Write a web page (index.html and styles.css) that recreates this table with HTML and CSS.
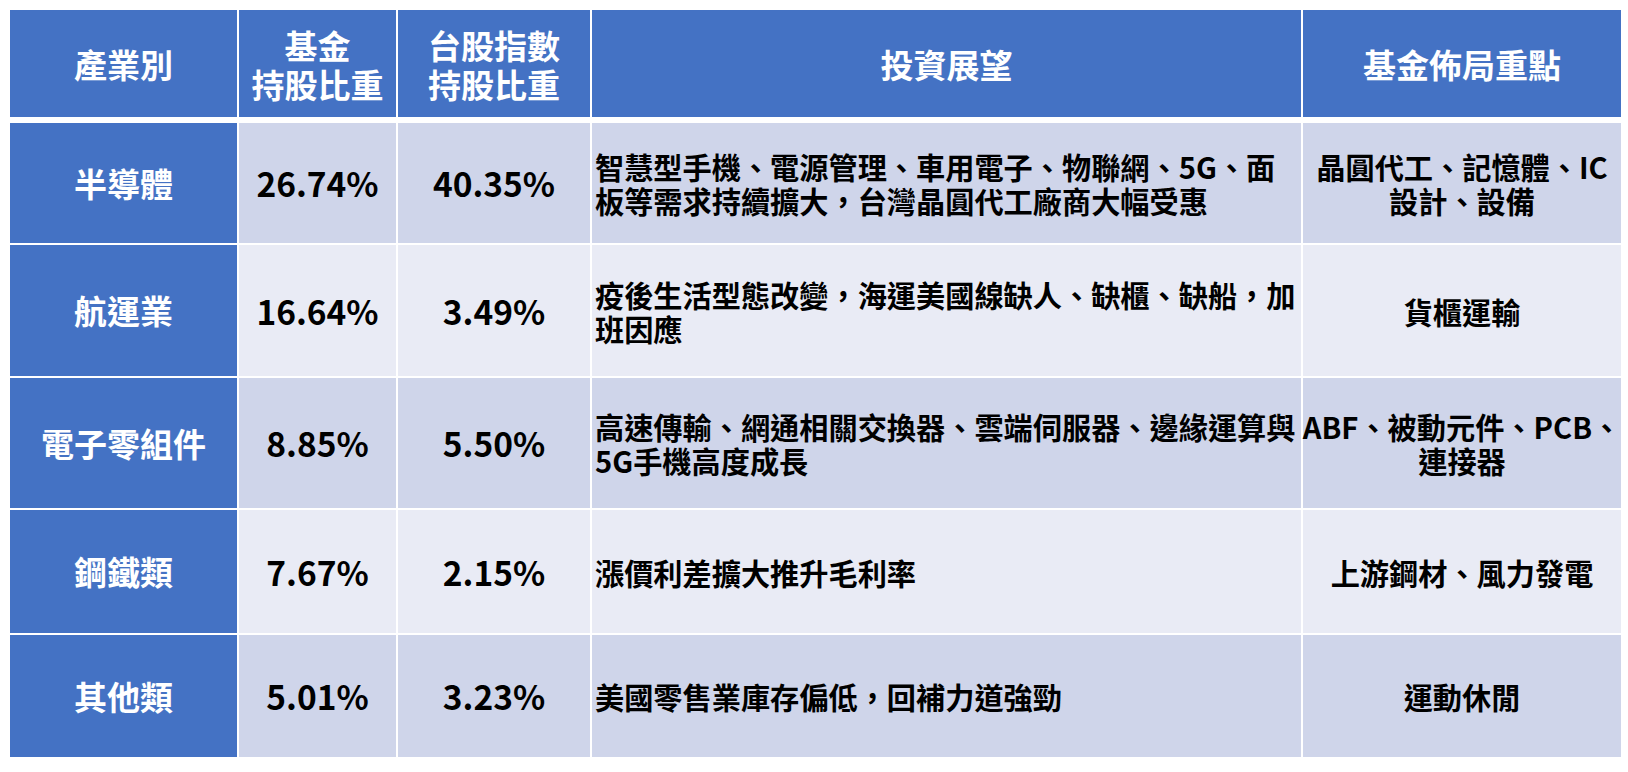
FILE: index.html
```html
<!DOCTYPE html>
<html lang="zh-Hant">
<head>
<meta charset="utf-8">
<title>產業配置</title>
<link rel="stylesheet" href="styles.css">
</head>
<body>
<div class="table">
  <div class="cell head">產業別</div>
  <div class="cell head">基金<br>持股比重</div>
  <div class="cell head">台股指數<br>持股比重</div>
  <div class="cell head">投資展望</div>
  <div class="cell head">基金佈局重點</div>

  <div class="cell first r1">半導體</div>
  <div class="cell num odd r1">26.74%</div>
  <div class="cell num odd r1">40.35%</div>
  <div class="cell desc odd r1">智慧型手機、電源管理、車用電子、物聯網、5G、面<br>板等需求持續擴大，台灣晶圓代工廠商大幅受惠</div>
  <div class="cell focus odd r1">晶圓代工、記憶體、IC<br>設計、設備</div>

  <div class="cell first">航運業</div>
  <div class="cell num even">16.64%</div>
  <div class="cell num even">3.49%</div>
  <div class="cell desc even">疫後生活型態改變，海運美國線缺人、缺櫃、缺船，加<br>班因應</div>
  <div class="cell focus even">貨櫃運輸</div>

  <div class="cell first">電子零組件</div>
  <div class="cell num odd">8.85%</div>
  <div class="cell num odd">5.50%</div>
  <div class="cell desc odd">高速傳輸、網通相關交換器、雲端伺服器、邊緣運算與<br>5G手機高度成長</div>
  <div class="cell focus odd">ABF、被動元件、PCB、<br>連接器</div>

  <div class="cell first">鋼鐵類</div>
  <div class="cell num even">7.67%</div>
  <div class="cell num even">2.15%</div>
  <div class="cell desc even">漲價利差擴大推升毛利率</div>
  <div class="cell focus even">上游鋼材、風力發電</div>

  <div class="cell first">其他類</div>
  <div class="cell num odd">5.01%</div>
  <div class="cell num odd">3.23%</div>
  <div class="cell desc odd">美國零售業庫存偏低，回補力道強勁</div>
  <div class="cell focus odd">運動休閒</div>
</div>
</body>
</html>
```
FILE: styles.css
```css
html, body {
  margin: 0;
  padding: 0;
  background: #ffffff;
}
body {
  padding: 10px 0 0 10px;
  font-family: "Noto Sans CJK TC", "Noto Sans CJK SC", sans-serif;
  font-weight: 700;
}
.table {
  display: grid;
  grid-template-columns: 227px 157px 192px 709px 318px;
  grid-template-rows: 107px 124px 131px 130px 123px 122px;
  column-gap: 2px;
  row-gap: 2px;
  width: max-content;
}
.cell {
  display: flex;
  align-items: center;
  justify-content: center;
  text-align: center;
  white-space: nowrap;
  color: #000000;
}
.head {
  background: #4472c4;
  color: #ffffff;
  font-size: 33px;
  line-height: 39px;
  padding-top: 2px;
}
.r1 { margin-top: 4px; }
.first {
  background: #4472c4;
  color: #ffffff;
  font-size: 33px;
  line-height: 39px;
}
.odd { background: #cfd5ea; }
.even { background: #e9ebf5; }
.num {
  font-size: 33.5px;
  line-height: 40px;
}
.desc {
  justify-content: flex-start;
  text-align: left;
  padding-left: 3px;
  font-size: 29.2px;
  line-height: 34px;
}
.focus {
  font-size: 29.2px;
  line-height: 34px;
}
```
